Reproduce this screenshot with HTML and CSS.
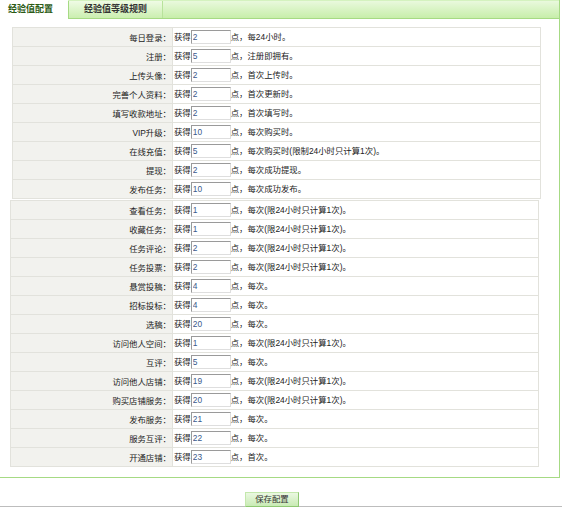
FILE: index.html
```html
<!DOCTYPE html>
<html lang="zh-CN">
<head>
<meta charset="utf-8">
<title>经验值配置</title>
<link rel="stylesheet" href="styles.css">
</head>
<body>
<div class="panel">
  <div class="tabs">
    <div class="tab tab-active">经验值配置</div>
    <div class="tab tab-other">经验值等级规则</div>
  </div>
  <div class="content">
    <table class="cfg cfg-a">
      <tr><td class="label">每日登录：</td><td class="value">获得<input class="num" value="2">点，每24小时。</td></tr>
      <tr><td class="label">注册：</td><td class="value">获得<input class="num" value="5">点，注册即拥有。</td></tr>
      <tr><td class="label">上传头像：</td><td class="value">获得<input class="num" value="2">点，首次上传时。</td></tr>
      <tr><td class="label">完善个人资料：</td><td class="value">获得<input class="num" value="2">点，首次更新时。</td></tr>
      <tr><td class="label">填写收款地址：</td><td class="value">获得<input class="num" value="2">点，首次填写时。</td></tr>
      <tr><td class="label">VIP升级：</td><td class="value">获得<input class="num" value="10">点，每次购买时。</td></tr>
      <tr><td class="label">在线充值：</td><td class="value">获得<input class="num" value="5">点，每次购买时(限制24小时只计算1次)。</td></tr>
      <tr><td class="label">提现：</td><td class="value">获得<input class="num" value="2">点，每次成功提现。</td></tr>
      <tr><td class="label">发布任务：</td><td class="value">获得<input class="num" value="10">点，每次成功发布。</td></tr>
    </table>
    <table class="cfg cfg-b">
      <tr><td class="label">查看任务：</td><td class="value">获得<input class="num" value="1">点，每次(限24小时只计算1次)。</td></tr>
      <tr><td class="label">收藏任务：</td><td class="value">获得<input class="num" value="1">点，每次(限24小时只计算1次)。</td></tr>
      <tr><td class="label">任务评论：</td><td class="value">获得<input class="num" value="2">点，每次(限24小时只计算1次)。</td></tr>
      <tr><td class="label">任务投票：</td><td class="value">获得<input class="num" value="2">点，每次(限24小时只计算1次)。</td></tr>
      <tr><td class="label">悬赏投稿：</td><td class="value">获得<input class="num" value="4">点，每次。</td></tr>
      <tr><td class="label">招标投标：</td><td class="value">获得<input class="num" value="4">点，每次。</td></tr>
      <tr><td class="label">选稿：</td><td class="value">获得<input class="num" value="20">点，每次。</td></tr>
      <tr><td class="label">访问他人空间：</td><td class="value">获得<input class="num" value="1">点，每次(限24小时只计算1次)。</td></tr>
      <tr><td class="label">互评：</td><td class="value">获得<input class="num" value="5">点，每次。</td></tr>
      <tr><td class="label">访问他人店铺：</td><td class="value">获得<input class="num" value="19">点，每次(限24小时只计算1次)。</td></tr>
      <tr><td class="label">购买店铺服务：</td><td class="value">获得<input class="num" value="20">点，每次(限24小时只计算1次)。</td></tr>
      <tr><td class="label">发布服务：</td><td class="value">获得<input class="num" value="21">点，每次。</td></tr>
      <tr><td class="label">服务互评：</td><td class="value">获得<input class="num" value="22">点，每次。</td></tr>
      <tr><td class="label">开通店铺：</td><td class="value">获得<input class="num" value="23">点，首次。</td></tr>
    </table>
  </div>
</div>
<div class="footer">
  <button class="btn" type="button">保存配置</button>
</div>
</body>
</html>
```

FILE: styles.css
```css
body {
  margin: 0;
  background: #fff;
  color: #222;
  font-family: "Liberation Sans", "Noto Sans CJK SC", sans-serif;
  font-size: 8.4px;
}

.panel {
  width: 559px;
  height: 477px;
  border-right: 1px solid #a6da84;
  border-bottom: 1px solid #a6da84;
}

.tabs {
  display: flex;
  height: 19px;
  box-sizing: border-box;
  border-bottom: 1px solid #a6da84;
  border-top: 1px solid #d4f2bf;
  background: linear-gradient(#e9f9dd, #c7eeaa);
}

.tab {
  font-weight: bold;
  font-size: 9px;
  line-height: 17px;
  text-align: center;
}

.tab-active {
  width: 68px;
  height: 19px;
  margin-top: -1px;
  line-height: 18px;
  box-sizing: border-box;
  padding-left: 8px;
  text-align: left;
  background: #fff;
  color: #2b5a14;
}

.tab-other {
  width: 93px;
  border-left: 1px solid #a6da84;
  border-right: 1px solid #b8e39b;
  background: linear-gradient(#effbe5, #cbefb0);
  color: #333;
}

.content {
  padding-top: 8px;
}

.cfg {
  border-collapse: collapse;
  width: 529px;
}

.cfg-a {
  margin-left: 12px;
}

.cfg-b {
  margin-left: 10px;
  margin-top: 1px;
}

.cfg tr {
  height: 19px;
}

.cfg td {
  padding: 0;
  border: 1px solid #e2e2dc;
  white-space: nowrap;
}

.cfg-a .label {
  width: 158px;
}

.cfg-b .label {
  width: 160px;
}

.label {
  background: #f2f2ee;
  text-align: right;
  padding-right: 1px !important;
}

.value {
  padding-left: 1px !important;
}

.num {
  width: 40px;
  height: 14px;
  box-sizing: border-box;
  margin: 0;
  padding: 0 1px;
  border: 1px solid;
  border-color: #9a9a9a #dedede #dedede #9a9a9a;
  font: inherit;
  color: #3a5a8c;
  vertical-align: middle;
  background: #fff;
}

.footer {
  height: 29px;
  box-sizing: border-box;
  padding-top: 14px;
  border-bottom: 1px solid #bdbdbd;
}

.btn {
  display: block;
  margin-left: 245px;
  width: 54px;
  height: 15px;
  padding: 0;
  border: 1px solid;
  border-color: #c4e8ad #8fc873 #8fc873 #c4e8ad;
  background: linear-gradient(#eaf8e1, #c9ebb4);
  font-family: "Liberation Sans", "Noto Sans CJK SC", sans-serif;
  font-size: 8.4px;
  color: #333;
  line-height: 13px;
}
```
